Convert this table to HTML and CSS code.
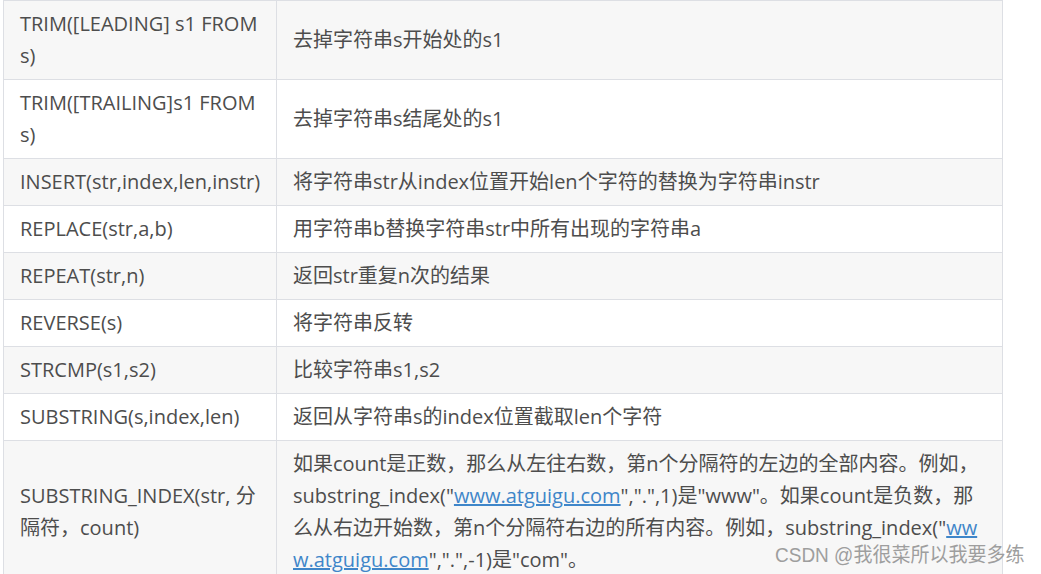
FILE: index.html
```html
<!DOCTYPE html>
<html lang="zh-CN">
<head>
<meta charset="utf-8">
<title>字符串函数</title>
<link rel="stylesheet" href="styles.css">
</head>
<body>
<div class="page">
  <table class="fn-table">
    <colgroup>
      <col class="col-fn">
      <col class="col-desc">
    </colgroup>
    <tbody>
      <tr><td class="fn">TRIM([LEADING] s1 FROM s)</td><td class="desc">去掉字符串s开始处的s1</td></tr>
      <tr><td class="fn">TRIM([TRAILING]s1 FROM s)</td><td class="desc">去掉字符串s结尾处的s1</td></tr>
      <tr><td class="fn">INSERT(str,index,len,instr)</td><td class="desc">将字符串str从index位置开始len个字符的替换为字符串instr</td></tr>
      <tr><td class="fn">REPLACE(str,a,b)</td><td class="desc">用字符串b替换字符串str中所有出现的字符串a</td></tr>
      <tr><td class="fn">REPEAT(str,n)</td><td class="desc">返回str重复n次的结果</td></tr>
      <tr><td class="fn">REVERSE(s)</td><td class="desc">将字符串反转</td></tr>
      <tr><td class="fn">STRCMP(s1,s2)</td><td class="desc">比较字符串s1,s2</td></tr>
      <tr><td class="fn">SUBSTRING(s,index,len)</td><td class="desc">返回从字符串s的index位置截取len个字符</td></tr>
      <tr><td class="fn">SUBSTRING_INDEX(str, 分隔符，count)</td><td class="desc">如果count是正数，那么从左往右数，第n个分隔符的左边的全部内容。例如，substring_index("<a href="#">www.atguigu.com</a>",".",1)是"www"。如果count是负数，那么从右边开始数，第n个分隔符右边的所有内容。例如，substring_index("<a href="#">www.atguigu.com</a>",".",-1)是"com"。</td></tr>
    </tbody>
  </table>
  <div class="watermark">CSDN @我很菜所以我要多练</div>
</div>
</body>
</html>
```

FILE: styles.css
```css
html, body {
  margin: 0;
  padding: 0;
  background: #ffffff;
  overflow: hidden;
}

.page {
  position: relative;
  width: 1041px;
  height: 574px;
  overflow: hidden;
}

.fn-table {
  margin-left: 3px;
  width: 1000px;
  table-layout: fixed;
  border-collapse: collapse;
  font-family: "Open Sans", "Noto Sans CJK SC", sans-serif;
  font-size: 20px;
  line-height: 32px;
  color: #4d4d4d;
}

.col-fn {
  width: 273px;
}

.fn-table td {
  border: 1px solid #dddfe4;
  padding: 7px 16px;
  vertical-align: middle;
}

.fn-table td.fn {
  word-break: normal;
  overflow: visible;
}

.fn-table td.desc {
  word-break: break-all;
}

.fn-table tr:nth-child(odd) td {
  background: #f7f7f7;
}

.fn-table tr:nth-child(even) td {
  background: #ffffff;
}

.fn-table a {
  color: #3f86c9;
  text-decoration: underline;
}

.watermark {
  position: absolute;
  left: 775px;
  top: 542px;
  font-family: "Liberation Sans", "Noto Sans CJK SC", sans-serif;
  font-size: 20px;
  line-height: 26px;
  color: #9e9e9e;
  white-space: nowrap;
  transform: scaleX(0.95);
  transform-origin: left top;
}
```
